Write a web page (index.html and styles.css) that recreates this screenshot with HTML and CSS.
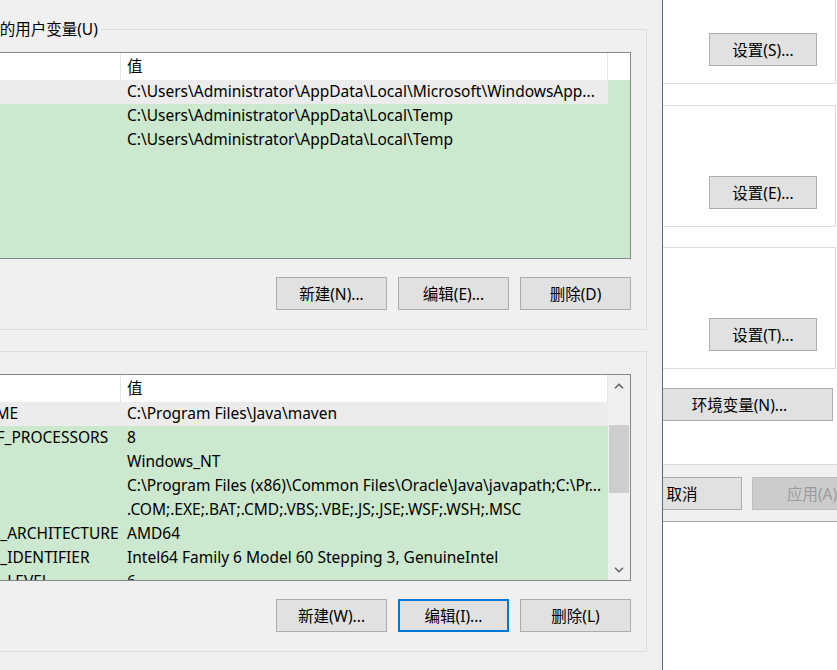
FILE: index.html
```html
<!DOCTYPE html>
<html lang="zh-CN">
  <head>
    <meta charset="UTF-8">
    <title>环境变量</title>
    <link rel="stylesheet" href="styles.css">
  </head>
  <body>
    <div class="screen">
      <div class="envdlg">
        <div class="group">
          <span class="group-title">Administrator 的用户变量(U)</span>
          <div class="list">
            <div class="list-body">
              <div class="lv-head">
                <div class="cell c-name">变量</div>
                <div class="cell c-val">值</div>
                <div class="c-fill"></div>
              </div>
              <div class="lv-row sel">
                <div class="cell c-name">OneDrive</div>
                <div class="cell c-val">C:\Users\Administrator\AppData\Local\Microsoft\WindowsApp...</div>
              </div>
              <div class="lv-row">
                <div class="cell c-name">TEMP</div>
                <div class="cell c-val">C:\Users\Administrator\AppData\Local\Temp</div>
              </div>
              <div class="lv-row">
                <div class="cell c-name">TMP</div>
                <div class="cell c-val">C:\Users\Administrator\AppData\Local\Temp</div>
              </div>
            </div>
          </div>
          <div class="btn-row">
            <button class="btn btn-env">新建(N)...</button>
            <button class="btn btn-env">编辑(E)...</button>
            <button class="btn btn-env">删除(D)</button>
          </div>
        </div>

        <div class="group group-sys">
          <span class="group-title">系统变量(S)</span>
          <div class="list">
            <div class="list-body">
              <div class="lv-head">
                <div class="cell c-name">变量</div>
                <div class="cell c-val">值</div>
              </div>
              <div class="lv-row sel">
                <div class="cell c-name">MAVEN_HOME</div>
                <div class="cell c-val">C:\Program Files\Java\maven</div>
              </div>
              <div class="lv-row">
                <div class="cell c-name">NUMBER_OF_PROCESSORS</div>
                <div class="cell c-val">8</div>
              </div>
              <div class="lv-row">
                <div class="cell c-name">OS</div>
                <div class="cell c-val">Windows_NT</div>
              </div>
              <div class="lv-row">
                <div class="cell c-name">Path</div>
                <div class="cell c-val">C:\Program Files (x86)\Common Files\Oracle\Java\javapath;C:\Pr...</div>
              </div>
              <div class="lv-row">
                <div class="cell c-name">PATHEXT</div>
                <div class="cell c-val">.COM;.EXE;.BAT;.CMD;.VBS;.VBE;.JS;.JSE;.WSF;.WSH;.MSC</div>
              </div>
              <div class="lv-row">
                <div class="cell c-name">PROCESSOR_ARCHITECTURE</div>
                <div class="cell c-val">AMD64</div>
              </div>
              <div class="lv-row">
                <div class="cell c-name">PROCESSOR_IDENTIFIER</div>
                <div class="cell c-val">Intel64 Family 6 Model 60 Stepping 3, GenuineIntel</div>
              </div>
              <div class="lv-row">
                <div class="cell c-name">PROCESSOR_LEVEL</div>
                <div class="cell c-val">6</div>
              </div>
            </div>
            <div class="vscroll">
              <div class="sb-arrow">
                <svg width="10" height="6" viewBox="0 0 10 6"><polyline points="1,5.2 5,1.2 9,5.2" fill="none" stroke="#606060" stroke-width="1.5"/></svg>
              </div>
              <div class="sb-track"><div class="sb-thumb"></div></div>
              <div class="sb-arrow">
                <svg width="10" height="6" viewBox="0 0 10 6"><polyline points="1,0.8 5,4.8 9,0.8" fill="none" stroke="#606060" stroke-width="1.5"/></svg>
              </div>
            </div>
          </div>
          <div class="btn-row">
            <button class="btn btn-env">新建(W)...</button>
            <button class="btn btn-env focus">编辑(I)...</button>
            <button class="btn btn-env">删除(L)</button>
          </div>
        </div>
      </div>

      <div class="sysprops">
        <div class="sys-page">
          <div class="sys-tab">
            <div class="sbox sbox-first">
              <button class="btn btn-set">设置(S)...</button>
            </div>
            <div class="sbox sbox-mid">
              <button class="btn btn-set">设置(E)...</button>
            </div>
            <div class="sbox">
              <button class="btn btn-set">设置(T)...</button>
            </div>
            <button class="btn btn-envvars">环境变量(N)...</button>
          </div>
          <div class="sys-foot">
            <button class="btn btn-foot">确定</button>
            <button class="btn btn-foot">取消</button>
            <button class="btn btn-foot" disabled>应用(A)</button>
          </div>
        </div>
      </div>
    </div>
  </body>
</html>
```
FILE: styles.css
```css
body {
  margin: 0;
  overflow: hidden;
  font-family: "Noto Sans", "Noto Sans CJK SC", sans-serif;
  font-size: 15.5px;
  color: #000;
  background: #fff;
}
.screen {
  display: flex;
  height: 670px;
  overflow: hidden;
}

/* environment variables dialog (cropped on the left) */
.envdlg {
  flex-shrink: 0;
  margin-left: -110px;
  width: 772px;
  padding-top: 29px;
  background: #f0f0f0;
  border-right: 1px solid #56688c;
}
.group {
  width: 757px;
  box-sizing: border-box;
  border: 1px solid #dcdcdc;
  padding: 0 15px 19px 12px;
}
.group-sys {
  margin-top: 21px;
}
.group-title {
  display: table;
  margin: -11px 0 0 -11px;
  padding: 0 3px;
  line-height: 20px;
  background: #f0f0f0;
}
.list {
  display: flex;
  margin-top: 13px;
  height: 207px;
  box-sizing: border-box;
  border: 1px solid #828790;
  background: #cce8cf;
  overflow: hidden;
}
.list-body {
  flex: 1;
  min-width: 0;
}
.lv-head {
  display: flex;
  height: 27px;
  line-height: 27px;
  background: #fff;
}
.lv-head .cell {
  border-right: 1px solid #e5e5e5;
}
.c-fill {
  flex: 1;
}
.lv-row {
  display: flex;
  height: 24px;
  line-height: 23px;
}
.lv-row.sel .cell {
  background: #ececec;
}
.cell {
  flex-shrink: 0;
  box-sizing: border-box;
  white-space: nowrap;
  overflow: hidden;
}
.c-name {
  width: 217px;
  padding-left: 8px;
}
.c-val {
  width: 487px;
  padding-left: 6px;
}

.vscroll {
  width: 22px;
  flex-shrink: 0;
  display: flex;
  flex-direction: column;
  background: #f0f0f0;
}
.sb-arrow {
  height: 21px;
  display: flex;
  align-items: center;
  justify-content: center;
}
.sb-track {
  flex: 1;
}
.sb-thumb {
  margin: 29px 1px 0;
  height: 68px;
  background: #cdcdcd;
}

.btn-row {
  display: flex;
  justify-content: flex-end;
  gap: 11px;
  margin-top: 18px;
}
.btn {
  flex-shrink: 0;
  height: 33px;
  padding: 0;
  box-sizing: border-box;
  border: 1px solid #adadad;
  background: #e1e1e1;
  font: inherit;
  color: #000;
}
.btn-env {
  width: 111px;
}
.btn.focus {
  border: 2px solid #0078d7;
}
.btn:disabled {
  background: #cccccc;
  border-color: #bfbfbf;
  color: #9a9a9a;
}

/* system properties dialog behind */
.sysprops {
  flex: 1;
  overflow: hidden;
  background: #fff;
}
.sys-page {
  margin-left: -180px;
  width: 354px;
}
.sys-tab {
  padding: 0 1px 43px 0;
  background: #fff;
  border-bottom: 1px solid #dadada;
}
.sbox {
  height: 122px;
  box-sizing: border-box;
  border: 1px solid #dcdcdc;
  display: flex;
  justify-content: flex-end;
  align-items: flex-start;
  padding: 70px 18px 0 0;
  margin-top: 20px;
}
.sbox-first {
  margin-top: -38px;
}
.sbox-mid {
  margin-top: 21px;
}
.btn-set {
  width: 108px;
}
.btn-envvars {
  display: block;
  width: 187px;
  margin: 19px 0 0 163px;
}
.sys-foot {
  display: flex;
  gap: 10px;
  padding: 12px 0 11px 9px;
  background: #f0f0f0;
  border-bottom: 1px solid #a0a0a0;
}
.btn-foot {
  width: 120px;
}
```
